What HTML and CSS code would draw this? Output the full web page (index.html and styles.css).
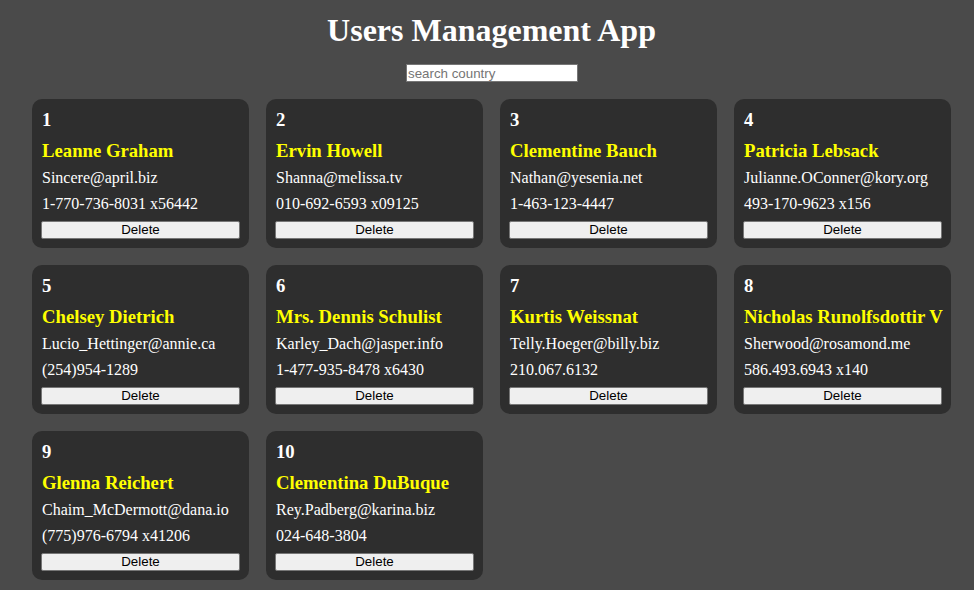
FILE: index.html
```html
<!DOCTYPE html>
<html>
<head>
<meta charset="utf-8">
<link rel="stylesheet" href="styles.css">
</head>
<body>
<div class="app">
  <h1 class="title">Users Management App</h1>
  <div class="search-row"><input class="search" type="text" placeholder="search country"></div>
  <div class="grid">
    <div class="card"><div class="num">1</div><div class="name">Leanne Graham</div><div class="line email">Sincere@april.biz</div><div class="line phone">1-770-736-8031 x56442</div><button class="del">Delete</button></div>
    <div class="card"><div class="num">2</div><div class="name">Ervin Howell</div><div class="line email">Shanna@melissa.tv</div><div class="line phone">010-692-6593 x09125</div><button class="del">Delete</button></div>
    <div class="card"><div class="num">3</div><div class="name">Clementine Bauch</div><div class="line email">Nathan@yesenia.net</div><div class="line phone">1-463-123-4447</div><button class="del">Delete</button></div>
    <div class="card"><div class="num">4</div><div class="name">Patricia Lebsack</div><div class="line email">Julianne.OConner@kory.org</div><div class="line phone">493-170-9623 x156</div><button class="del">Delete</button></div>
    <div class="card"><div class="num">5</div><div class="name">Chelsey Dietrich</div><div class="line email">Lucio_Hettinger@annie.ca</div><div class="line phone">(254)954-1289</div><button class="del">Delete</button></div>
    <div class="card"><div class="num">6</div><div class="name">Mrs. Dennis Schulist</div><div class="line email">Karley_Dach@jasper.info</div><div class="line phone">1-477-935-8478 x6430</div><button class="del">Delete</button></div>
    <div class="card"><div class="num">7</div><div class="name">Kurtis Weissnat</div><div class="line email">Telly.Hoeger@billy.biz</div><div class="line phone">210.067.6132</div><button class="del">Delete</button></div>
    <div class="card"><div class="num">8</div><div class="name">Nicholas Runolfsdottir V</div><div class="line email">Sherwood@rosamond.me</div><div class="line phone">586.493.6943 x140</div><button class="del">Delete</button></div>
    <div class="card"><div class="num">9</div><div class="name">Glenna Reichert</div><div class="line email">Chaim_McDermott@dana.io</div><div class="line phone">(775)976-6794 x41206</div><button class="del">Delete</button></div>
    <div class="card"><div class="num">10</div><div class="name">Clementina DuBuque</div><div class="line email">Rey.Padberg@karina.biz</div><div class="line phone">024-648-3804</div><button class="del">Delete</button></div>
  </div>
</div>
</body>
</html>
```
FILE: styles.css
```css
html, body {
  margin: 0;
  padding: 0;
  background: #4a4a4a;
}
body {
  font-family: "Liberation Serif", "Times New Roman", serif;
  color: #ffffff;
}
.app {
  width: 919px;
  margin-left: 32px;
  padding-top: 12px;
  display: flex;
  flex-direction: column;
}
.title {
  margin: 0;
  font-size: 32px;
  line-height: 37px;
  font-weight: bold;
  text-align: center;
  color: #ffffff;
}
.search-row {
  display: flex;
  justify-content: center;
  margin-top: 15px;
}
.search {
  box-sizing: border-box;
  width: 172px;
  height: 18px;
  margin: 0 0 0 1px;
  padding: 0 1px;
  border: 1px solid #767676;
  background: #ffffff;
  font-family: "Liberation Sans", Arial, sans-serif;
  font-size: 13.33px;
  color: #000;
  outline: none;
}
.search::placeholder {
  color: #757575;
}
.grid {
  margin-top: 17px;
  display: grid;
  grid-template-columns: repeat(4, 217px);
  gap: 17px;
}
.card {
  box-sizing: border-box;
  height: 149px;
  background: #2e2e2e;
  border-radius: 10px;
  padding: 10px 9px 9px 9px;
  display: flex;
  flex-direction: column;
}
.num {
  font-size: 18.72px;
  font-weight: bold;
  line-height: 22px;
  margin-left: 1px;
}
.name {
  margin-top: 9px;
  font-size: 18.72px;
  font-weight: bold;
  line-height: 22px;
  color: #ffff00;
  white-space: nowrap;
  margin-left: 1px;
}
.line {
  font-size: 16px;
  line-height: 18px;
  margin-left: 1px;
  white-space: nowrap;
}
.email {
  margin-top: 7px;
}
.phone {
  margin-top: 8px;
}
.del {
  margin-top: 8px;
  box-sizing: border-box;
  width: 100%;
  height: 18px;
  padding: 0;
  background: #efefef;
  border: 1px solid #767676;
  border-radius: 2px;
  font-family: "Liberation Sans", Arial, sans-serif;
  font-size: 13.33px;
  line-height: 16px;
  color: #000;
}
```
